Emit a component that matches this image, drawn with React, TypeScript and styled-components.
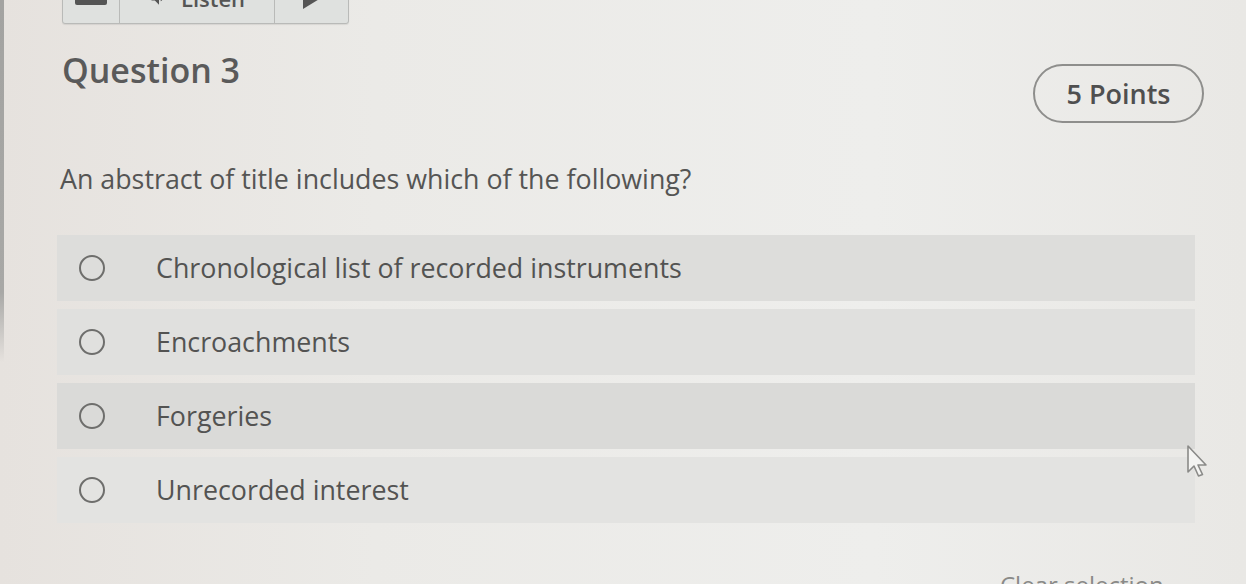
import React from "react";
import styled, { createGlobalStyle } from "styled-components";

const Global = createGlobalStyle`
  html, body { margin: 0; padding: 0; }
  body {
    width: 1246px;
    height: 584px;
    overflow: hidden;
    background: #eaeae7;
    font-family: "Open Sans", "Noto Sans", sans-serif;
  }
`;

const Page = styled.div`
  position: relative;
  width: 1246px;
  height: 584px;
  box-sizing: border-box;
  overflow: hidden;
  padding: 0 42px 0 57px;
  background:
    linear-gradient(to bottom, #a3a3a1 0%, #a8a8a6 50%, rgba(200,200,198,0) 62%) no-repeat left top / 4px 100%,
    linear-gradient(to right, #e6e2de 0%, #ebeae7 30%, #eeeeec 70%, #e9e8e5 100%);
  display: flex;
  flex-direction: column;
  & > * { flex-shrink: 0; }
`;

const Toolbar = styled.div`
  display: flex;
  align-self: flex-start;
  margin: -28px 0 0 5px;
  height: 50px;
  border: 1px solid #b9bab8;
  border-radius: 0 0 3px 3px;
  background: #dfe1df;
  box-shadow: 0 1px 1px rgba(0, 0, 0, 0.08);
`;

const ToolSeg = styled.div<{ $w: number }>`
  width: ${(p) => p.$w}px;
  display: flex;
  align-items: center;
  justify-content: center;
  gap: 12px;
  border-left: 1px solid #b9bab8;
  &:first-child { border-left: none; }
  color: #555;
  font-size: 22px;
  font-weight: 600;
`;

const Header = styled.div`
  display: flex;
  justify-content: space-between;
  align-items: flex-start;
`;

const Title = styled.h2`
  margin: 26px 0 0 5px;
  font-size: 34px;
  line-height: 40px;
  font-weight: 600;
  color: #5a5a5a;
`;

const Points = styled.div`
  margin-top: 40px;
  width: 171px;
  height: 59px;
  box-sizing: border-box;
  border: 2px solid #8e8e8c;
  border-radius: 30px;
  display: flex;
  align-items: center;
  justify-content: center;
  font-size: 27px;
  font-weight: 600;
  color: #4f4f4f;
`;

const Prompt = styled.p`
  margin: 38px 0 0 3px;
  font-size: 26.8px;
  line-height: 36px;
  color: #555554;
`;

const Options = styled.div`
  margin: 38px 9px 0 0;
  display: flex;
  flex-direction: column;
  gap: 8px;
`;

const Row = styled.label<{ $shade: string }>`
  height: 66px;
  display: flex;
  align-items: center;
  background: ${(p) => p.$shade};
  padding-left: 22px;
`;

const Radio = styled.span`
  width: 26px;
  height: 26px;
  box-sizing: border-box;
  border: 2.5px solid #6e6e6c;
  border-radius: 50%;
  flex: none;
`;

const OptionText = styled.span`
  margin-left: 51px;
  font-size: 26.8px;
  line-height: 34px;
  color: #535352;
`;

const Footer = styled.div`
  margin-top: 45px;
  display: flex;
`;

const FooterText = styled.span`
  margin-left: 943px;
  font-size: 24px;
  line-height: 33px;
  color: #8a8a88;
  white-space: nowrap;
`;

const Cursor = styled.svg`
  position: absolute;
  left: 1186px;
  top: 444px;
`;

const options = [
  { text: "Chronological list of recorded instruments", shade: "#dddddb" },
  { text: "Encroachments", shade: "#e0e0de" },
  { text: "Forgeries", shade: "#dadad8" },
  { text: "Unrecorded interest", shade: "#e3e3e1" },
];

export default function App() {
  return (
    <>
      <Global />
      <Page>
        <Toolbar>
          <ToolSeg $w={56}>
            <svg width="32" height="14" viewBox="0 0 32 14">
              <rect x="0" y="0" width="32" height="14" rx="2" fill="#555" />
            </svg>
          </ToolSeg>
          <ToolSeg $w={154}>
            <svg width="20" height="20" viewBox="0 0 24 24" fill="#555">
              <path d="M3 9v6h4l5 5V4L7 9H3z" />
              <path d="M16.5 12A4.5 4.5 0 0 0 14 8v8a4.5 4.5 0 0 0 2.5-4z" />
            </svg>
            <span>Listen</span>
          </ToolSeg>
          <ToolSeg $w={73}>
            <svg width="22" height="22" viewBox="0 0 22 22">
              <path d="M2 0 L20 11 L2 22 Z" fill="#555" />
            </svg>
          </ToolSeg>
        </Toolbar>

        <Header>
          <Title>Question 3</Title>
          <Points>5 Points</Points>
        </Header>

        <Prompt>An abstract of title includes which of the following?</Prompt>

        <Options>
          {options.map((o) => (
            <Row key={o.text} $shade={o.shade}>
              <Radio />
              <OptionText>{o.text}</OptionText>
            </Row>
          ))}
        </Options>

        <Footer>
          <FooterText>Clear selection</FooterText>
        </Footer>

        <Cursor width="26" height="36" viewBox="0 0 26 36">
          <path
            d="M2 2 L2 28 L8 22 L12.5 32 L16.5 30.5 L12 21 L20 21 Z"
            fill="#f4f4f2"
            stroke="#8a8a88"
            strokeWidth="1.6"
            strokeLinejoin="round"
          />
        </Cursor>
      </Page>
    </>
  );
}
